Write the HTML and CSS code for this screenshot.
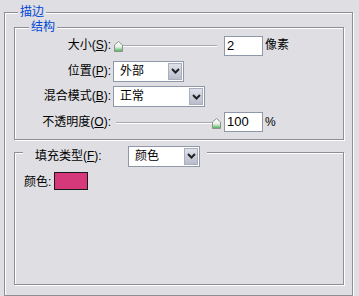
FILE: index.html
```html
<!DOCTYPE html>
<html lang="zh-CN">
<head>
    <meta charset="UTF-8">
    <meta name="viewport" content="width=device-width, initial-scale=1.0">
    <title>描边</title>
    <link rel="stylesheet" href="styles.css">
</head>
<body>
    <fieldset class="group outer">
        <legend class="title outer-title">描边</legend>

        <!-- 结构 -->
        <fieldset class="group structure">
            <legend class="title sub">结构</legend>
            <div class="rows">
                <span class="lbl">大小(<u>S</u>):</span>
                <div class="ctl">
                    <div class="slider">
                        <span class="track"></span>
                        <svg class="thumb thumb-min" width="9" height="11" viewBox="0 0 9 11">
                            <defs>
                                <linearGradient id="tg1" x1="0" y1="0" x2="0" y2="1">
                                    <stop offset="0" stop-color="#ffffff"/>
                                    <stop offset="0.55" stop-color="#e6efe6"/>
                                    <stop offset="1" stop-color="#3fae4a"/>
                                </linearGradient>
                            </defs>
                            <path d="M0.5 4 L4.5 0.5 L8.5 4 L8.5 10.5 L0.5 10.5 Z" fill="url(#tg1)" stroke="#8a948a"/>
                        </svg>
                    </div>
                    <span class="num">2</span>
                    <span class="unit">像素</span>
                </div>

                <span class="lbl">位置(<u>P</u>):</span>
                <div class="ctl">
                    <div class="select w-pos">
                        <span class="val">外部</span>
                        <span class="arrow">
                            <svg width="9" height="6" viewBox="0 0 9 6"><path d="M1 1 L4.5 4.5 L8 1" fill="none" stroke="#222" stroke-width="2"/></svg>
                        </span>
                    </div>
                </div>

                <span class="lbl">混合模式(<u>B</u>):</span>
                <div class="ctl">
                    <div class="select w-mode">
                        <span class="val">正常</span>
                        <span class="arrow">
                            <svg width="9" height="6" viewBox="0 0 9 6"><path d="M1 1 L4.5 4.5 L8 1" fill="none" stroke="#222" stroke-width="2"/></svg>
                        </span>
                    </div>
                </div>

                <span class="lbl">不透明度(<u>O</u>):</span>
                <div class="ctl">
                    <div class="slider">
                        <span class="track"></span>
                        <svg class="thumb thumb-max" width="9" height="11" viewBox="0 0 9 11">
                            <defs>
                                <linearGradient id="tg2" x1="0" y1="0" x2="0" y2="1">
                                    <stop offset="0" stop-color="#ffffff"/>
                                    <stop offset="0.55" stop-color="#e6efe6"/>
                                    <stop offset="1" stop-color="#3fae4a"/>
                                </linearGradient>
                            </defs>
                            <path d="M0.5 4 L4.5 0.5 L8.5 4 L8.5 10.5 L0.5 10.5 Z" fill="url(#tg2)" stroke="#8a948a"/>
                        </svg>
                    </div>
                    <span class="num">100</span>
                    <span class="unit">%</span>
                </div>
            </div>
        </fieldset>

        <!-- 填充 -->
        <fieldset class="group fill">
            <legend class="fill-legend">
                <span class="lbl fill-lbl">填充类型(<u>F</u>):</span>
                <span class="select w-fill">
                    <span class="val">颜色</span>
                    <span class="arrow">
                        <svg width="9" height="6" viewBox="0 0 9 6"><path d="M1 1 L4.5 4.5 L8 1" fill="none" stroke="#222" stroke-width="2"/></svg>
                    </span>
                </span>
            </legend>
            <div class="color-row">
                <span class="color-lbl">颜色:</span>
                <span class="swatch"></span>
            </div>
        </fieldset>
    </fieldset>
</body>
</html>
```

FILE: styles.css
```css
/* Dialog base */
body {
    margin: 0;
    background-color: #dfdfe3;
    font-family: "Liberation Sans", "Noto Sans CJK SC", sans-serif;
    font-size: 12px;
    color: #000;
    overflow: hidden;
}

/* Etched group boxes */
.group {
    margin: 0;
    padding: 0;
    min-inline-size: 0;
    box-sizing: border-box;
    border: 1px solid #8e8e94;
    box-shadow: inset 1px 1px 0 #fff, 1px 1px 0 #fff;
}

.outer {
    width: 349px;
    margin: 5px 0 0 4px;
    padding: 1px 8px 10px 9px;
}

.structure,
.fill {
    width: 330px;
}

.structure {
    padding: 1px 0 6px 0;
}

.fill {
    margin-top: 6px;
    padding: 12px 0 94px 9px;
}

.title {
    padding: 0 2px;
    line-height: 14px;
    height: 14px;
    color: #0046d5;
    background-color: #dfdfe3;
}

.outer-title {
    margin-left: 4px;
}

.title.sub {
    margin-left: 14px;
}

/* Label / control rows */
.rows {
    display: grid;
    grid-template-columns: 96px auto;
    column-gap: 2px;
    grid-auto-rows: 21px;
    row-gap: 4.5px;
    align-items: center;
}

.lbl {
    text-align: right;
    line-height: 21px;
    white-space: nowrap;
}

.ctl {
    display: flex;
    align-items: center;
    height: 21px;
}

/* Slider */
.slider {
    position: relative;
    width: 104px;
    height: 21px;
}

.track {
    position: absolute;
    left: 3px;
    right: 0;
    top: 10px;
    height: 1px;
    background-color: #a8a8ae;
    border-bottom: 1px solid #fff;
}

.thumb {
    position: absolute;
    top: 6px;
    display: block;
}

.thumb-min {
    left: 1px;
}

.thumb-max {
    left: 99px;
}

/* Number fields */
.num {
    box-sizing: border-box;
    width: 39px;
    height: 20px;
    margin-left: 7px;
    padding-left: 2px;
    background-color: #fff;
    border: 1px solid #8f98a8;
    font-size: 13px;
    line-height: 18px;
}

.unit {
    margin-left: 2px;
    line-height: 21px;
}

/* Dropdowns */
.select {
    display: flex;
    box-sizing: border-box;
    height: 21px;
    background-color: #fff;
    border: 1px solid #8f98a8;
}

.select .val {
    flex: 1;
    padding-left: 6px;
    line-height: 19px;
}

.select .arrow {
    display: flex;
    align-items: center;
    justify-content: center;
    width: 14px;
    margin: 1px;
    background: linear-gradient(#dfe1ea, #b9bccb);
    border: 1px solid #a9adbd;
    box-sizing: border-box;
}

.w-pos {
    width: 71px;
}

.w-mode {
    width: 92px;
}

.w-fill {
    width: 72px;
}

/* Fill type legend with dropdown */
.fill-legend {
    display: flex;
    align-items: flex-start;
    height: 14px;
    margin-left: -1px;
    padding: 0 7px 0 12px;
    background-color: #dfdfe3;
}

.fill-lbl {
    width: 93px;
    text-align: left;
}

/* Colour row */
.color-row {
    display: flex;
    align-items: center;
    height: 18px;
}

.color-lbl {
    width: 30px;
}

.swatch {
    box-sizing: border-box;
    width: 34px;
    height: 18px;
    background-color: #d6397a;
    border: 1px solid #1a1a1a;
}
```
